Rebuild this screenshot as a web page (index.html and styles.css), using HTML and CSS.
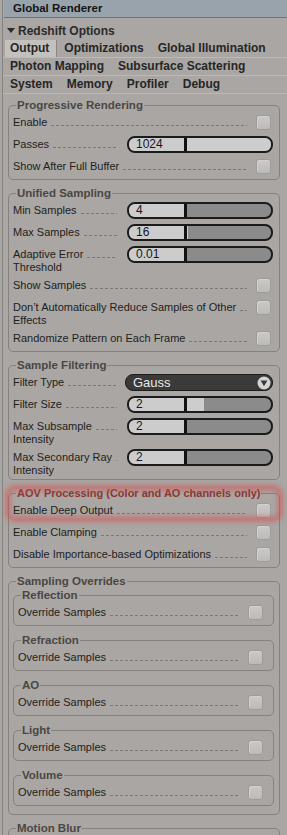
FILE: index.html
```html
<!DOCTYPE html>
<html>
<head>
<meta charset="utf-8">
<link rel="stylesheet" href="styles.css">
</head>
<body>
<div class="frame">
  <div class="titlebar">Global Renderer</div>
  <div class="section-head"><span class="tri"></span>Redshift Options</div>
  <div class="tabs">
    <div class="tabrow"><span class="tab active">Output</span><span class="tab">Optimizations</span><span class="tab">Global Illumination</span></div>
    <div class="tabrow"><span class="tab">Photon Mapping</span><span class="tab">Subsurface Scattering</span></div>
    <div class="tabrow"><span class="tab">System</span><span class="tab">Memory</span><span class="tab">Profiler</span><span class="tab">Debug</span></div>
  </div>

  <div class="content">
    <fieldset class="group first">
      <legend>Progressive Rendering</legend>
      <div class="row"><div class="label"><div class="line"><span>Enable</span><span class="lead"></span></div></div><span class="check"></span></div>
      <div class="row"><div class="label fixed"><div class="line"><span>Passes</span><span class="lead"></span></div></div><div class="slider"><span class="val">1024</span><span class="track"><span class="fill" style="width:100%"></span></span></div></div>
      <div class="row"><div class="label"><div class="line"><span>Show After Full Buffer</span><span class="lead"></span></div></div><span class="check"></span></div>
    </fieldset>

    <fieldset class="group">
      <legend>Unified Sampling</legend>
      <div class="row"><div class="label fixed"><div class="line"><span>Min Samples</span><span class="lead"></span></div></div><div class="slider"><span class="val">4</span><span class="track"><span class="fill" style="width:0%"></span></span></div></div>
      <div class="row"><div class="label fixed"><div class="line"><span>Max Samples</span><span class="lead"></span></div></div><div class="slider"><span class="val">16</span><span class="track"><span class="fill" style="width:1%"></span></span></div></div>
      <div class="row"><div class="label fixed"><div class="line"><span>Adaptive Error</span><span class="lead"></span></div><div>Threshold</div></div><div class="slider"><span class="val">0.01</span><span class="track"><span class="fill" style="width:0%"></span></span></div></div>
      <div class="row"><div class="label"><div class="line"><span>Show Samples</span><span class="lead"></span></div></div><span class="check"></span></div>
      <div class="row"><div class="label"><div class="line"><span>Don’t Automatically Reduce Samples of Other</span><span class="lead"></span></div><div>Effects</div></div><span class="check"></span></div>
      <div class="row"><div class="label"><div class="line"><span>Randomize Pattern on Each Frame</span><span class="lead"></span></div></div><span class="check"></span></div>
    </fieldset>

    <fieldset class="group">
      <legend>Sample Filtering</legend>
      <div class="row"><div class="label fixed"><div class="line"><span>Filter Type</span><span class="lead"></span></div></div><div class="dropdown"><span>Gauss</span><svg width="14" height="14" viewBox="0 0 14 14"><circle cx="7" cy="7" r="6.5" fill="#d4d4d4"/><path d="M3.6 4.6h6.8L7 10.2z" fill="#3a3a3a"/></svg></div></div>
      <div class="row"><div class="label fixed"><div class="line"><span>Filter Size</span><span class="lead"></span></div></div><div class="slider"><span class="val">2</span><span class="track"><span class="fill" style="width:20%"></span></span></div></div>
      <div class="row"><div class="label fixed"><div class="line"><span>Max Subsample</span><span class="lead"></span></div><div>Intensity</div></div><div class="slider"><span class="val">2</span><span class="track"><span class="fill" style="width:0%"></span></span></div></div>
      <div class="row"><div class="label fixed"><div class="line"><span>Max Secondary Ray</span><span class="lead"></span></div><div>Intensity</div></div><div class="slider"><span class="val">2</span><span class="track"><span class="fill" style="width:0%"></span></span></div></div>
    </fieldset>

    <div class="aov">
      <fieldset class="group">
        <legend class="red">AOV Processing (Color and AO channels only)</legend>
        <div class="row"><div class="label"><div class="line"><span>Enable Deep Output</span><span class="lead"></span></div></div><span class="check"></span></div>
        <div class="row"><div class="label"><div class="line"><span>Enable Clamping</span><span class="lead"></span></div></div><span class="check"></span></div>
        <div class="row"><div class="label"><div class="line"><span>Disable Importance-based Optimizations</span><span class="lead"></span></div></div><span class="check"></span></div>
      </fieldset>
      <div class="glow"></div>
    </div>

    <fieldset class="group outer">
      <legend>Sampling Overrides</legend>
      <fieldset class="group inner">
        <legend>Reflection</legend>
        <div class="row"><div class="label"><div class="line"><span>Override Samples</span><span class="lead"></span></div></div><span class="check"></span></div>
      </fieldset>
      <fieldset class="group inner">
        <legend>Refraction</legend>
        <div class="row"><div class="label"><div class="line"><span>Override Samples</span><span class="lead"></span></div></div><span class="check"></span></div>
      </fieldset>
      <fieldset class="group inner">
        <legend>AO</legend>
        <div class="row"><div class="label"><div class="line"><span>Override Samples</span><span class="lead"></span></div></div><span class="check"></span></div>
      </fieldset>
      <fieldset class="group inner">
        <legend>Light</legend>
        <div class="row"><div class="label"><div class="line"><span>Override Samples</span><span class="lead"></span></div></div><span class="check"></span></div>
      </fieldset>
      <fieldset class="group inner">
        <legend>Volume</legend>
        <div class="row"><div class="label"><div class="line"><span>Override Samples</span><span class="lead"></span></div></div><span class="check"></span></div>
      </fieldset>
    </fieldset>

    <fieldset class="group">
      <legend>Motion Blur</legend>
      <div class="row"><div class="label"><div class="line"><span>Enable</span><span class="lead"></span></div></div><span class="check"></span></div>
    </fieldset>
  </div>
</div>
</body>
</html>
```

FILE: styles.css
```css
* { box-sizing: border-box; }

html, body { height: 100%; }

body {
  margin: 0;
  padding-left: 2px;
  background: #a9a6a3;
  font-family: "Liberation Sans", Arial, sans-serif;
  color: #1e1e1e;
  overflow: hidden;
}

.frame {
  border-left: 1px solid #85827f;
  height: 835px;
  overflow: hidden;
}

.titlebar {
  margin-left: 1px;
  height: 18px;
  background: #98a3ab;
  border-bottom: 1px solid #6d7276;
  padding-left: 9px;
  font-weight: bold;
  font-size: 11.5px;
  line-height: 17px;
  color: #141414;
}

.section-head {
  margin-top: 4px;
  height: 17px;
  display: flex;
  align-items: center;
  gap: 3px;
  padding-left: 4px;
  font-weight: bold;
  font-size: 12px;
  color: #2b2b2b;
}

.tri {
  width: 0;
  height: 0;
  border-left: 4px solid transparent;
  border-right: 4px solid transparent;
  border-top: 5px solid #2b2b2b;
}

.tabs { margin-top: 1px; }

.tabrow {
  height: 18px;
  display: flex;
  padding-left: 2px;
  border-bottom: 1px solid #bcb9b6;
}

.tab {
  padding: 0 7px;
  font-weight: bold;
  font-size: 12px;
  line-height: 17px;
  color: #262626;
}

.tab:first-child { padding-left: 5px; }

.tab.active {
  background: #c3c1be;
  border-right: 1px solid #8a8784;
}

.content {
  padding: 0 7px 0 5px;
}

.group {
  margin: 7px 0 0;
  padding: 0 7px 2px 4px;
  border: 1px solid #84817e;
  border-radius: 5px;
  min-width: 0;
}

.group.first { margin-top: 5px; }

.group legend {
  margin-left: 3px;
  padding: 0 1px;
  font-weight: bold;
  font-size: 11.5px;
  line-height: 12px;
  color: #4a4744;
  white-space: nowrap;
}

.group legend.red {
  color: #8a3634;
  font-size: 11px;
}

.row {
  display: flex;
  align-items: flex-start;
  min-height: 22px;
}

.label {
  flex: 1;
  min-width: 0;
  padding-top: 5px;
  font-size: 11px;
  line-height: 13px;
  color: #1e1e1e;
}

.label.fixed {
  flex: 0 0 104px;
  margin-right: 10px;
}

.line {
  display: flex;
  white-space: nowrap;
}

.lead {
  flex: 1;
  height: 1px;
  align-self: flex-end;
  margin: 0 0 3px 4px;
  background-image: repeating-linear-gradient(to right, #7c7976 0 3px, transparent 3px 5px);
}

.check {
  flex: none;
  width: 15px;
  height: 15px;
  margin: 4px 1px 0 9px;
  border: 1px solid #9e9c99;
  border-radius: 3px;
  background: linear-gradient(#cbc9c7, #bdbbb9);
  box-shadow: inset 1px 1px 0 #d4d2d0;
}

.slider {
  flex: none;
  width: 146px;
  height: 17px;
  margin-top: 3px;
  display: flex;
  border: 2px solid #1b1b1b;
  border-radius: 8px;
  overflow: hidden;
  background: #8b8b8b;
}

.val {
  flex: none;
  width: 58px;
  padding-left: 7px;
  background: #cccccc;
  border-right: 3px solid #111;
  font-size: 12px;
  line-height: 13px;
  color: #161626;
}

.track {
  flex: 1;
  display: flex;
}

.fill {
  height: 100%;
  background: #cdcdcd;
}

.dropdown {
  flex: none;
  width: 148px;
  height: 17px;
  margin: 3px 0 0 -2px;
  padding: 0 1px 0 7px;
  display: flex;
  align-items: center;
  justify-content: space-between;
  background: #3a3a3a;
  border: 1px solid #1c1c1c;
  border-radius: 8px;
  color: #e8e8e8;
  font-size: 13px;
  line-height: 15px;
}

.dropdown svg { display: block; }

.aov {
  position: relative;
  margin-top: 7px;
}

.aov > .group { margin-top: 0; }

.glow {
  position: absolute;
  left: 0;
  right: 0;
  top: 1px;
  height: 31px;
  border-radius: 7px;
  box-shadow: 0 0 4px 3px rgba(222, 72, 72, 0.5), inset 0 0 4px 3px rgba(222, 72, 72, 0.45);
  pointer-events: none;
}

.group.outer {
  padding: 0 5px 8px 4px;
}

.group.inner {
  margin-top: 8px;
  padding: 0 9px 2px 4px;
}

.group.inner:first-of-type { margin-top: 2px; }
```
